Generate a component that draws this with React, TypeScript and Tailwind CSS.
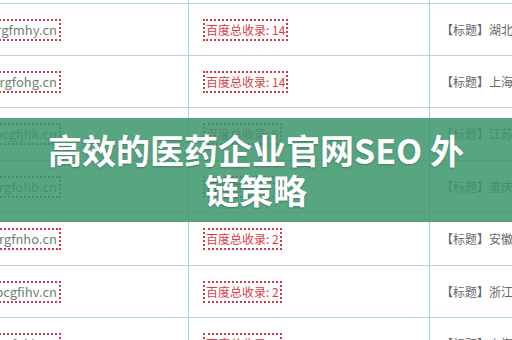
const rows = [
  { domain: 'www.orgfmhy.cn', count: 14, title: '湖北省医药企业官网推广' },
  { domain: 'www.orgfohg.cn', count: 14, title: '上海医药企业网站优化' },
  { domain: 'www.abcgfjhk.cn', count: 8, title: '江苏医药行业外链建设' },
  { domain: 'www.orgfohb.cn', count: 7, title: '重庆医药企业SEO方案' },
  { domain: 'www.orgfnho.cn', count: 2, title: '安徽医药官网关键词排名' },
  { domain: 'www.abcgfihv.cn', count: 2, title: '浙江医药企业网络营销' },
  { domain: 'www.orgfqkb.cn', count: 1, title: '上海医药网站外链策略' },
];

const heights = ['h-[52px]', 'h-[52px]', 'h-[53px]', 'h-[52px]', 'h-[53px]', 'h-[52px]', 'h-[52px]'];

export default function App() {
  return (
    <div className="relative w-[512px] h-[340px] overflow-hidden bg-white font-['Noto_Sans_CJK_SC','Noto_Sans',sans-serif]">
      {/* table */}
      <div className="flex flex-col">
        <div className="h-[3px] flex">
          <div className="w-[189px] border-r border-[#a9cde3]" />
          <div className="w-[241px] border-r border-[#a9cde3]" />
          <div className="flex-1" />
        </div>
        {rows.map((row, i) => (
          <div key={row.domain} className={`flex border-t border-[#b3d3e6] ${heights[i]}`}>
            <div className="w-[189px] shrink-0 flex items-center justify-end pr-[127px] overflow-hidden border-r border-[#a9cde3]">
              <span className="shrink-0 whitespace-nowrap border-2 border-dotted border-[#cf3a4a] px-[2px] leading-[18px] text-[13px] text-[#6f7f77]">
                {row.domain}
              </span>
            </div>
            <div className="w-[241px] shrink-0 flex items-center pl-[14px] border-r border-[#a9cde3]">
              <span className="whitespace-nowrap border-2 border-dotted border-[#cf3a4a] px-[1px] leading-[18px] text-[12px] text-[#db3b47]">
                百度总收录: {row.count}
              </span>
            </div>
            <div className="flex-1 flex items-center pl-[11px] overflow-hidden">
              <span className="whitespace-nowrap text-[12px] text-[#666]">【标题】{row.title}</span>
            </div>
          </div>
        ))}
      </div>

      {/* title band */}
      <div className="absolute left-0 right-0 top-[118px] h-[104px] bg-[rgba(60,150,110,0.86)] flex items-center justify-center">
        <h1 className="w-[432px] text-center text-white font-bold text-[34px] leading-[40px] [text-shadow:0_1px_2px_rgba(0,0,0,0.25)]">
          高效的医药企业官网SEO 外链策略
        </h1>
      </div>
    </div>
  );
}
